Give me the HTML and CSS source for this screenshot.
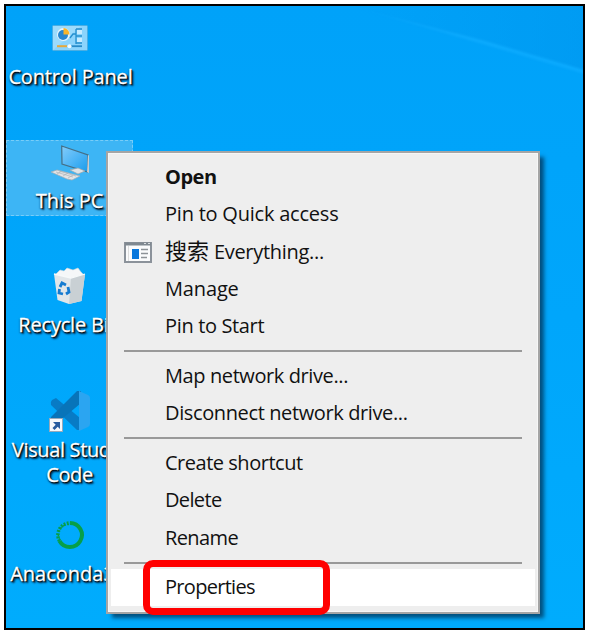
FILE: index.html
```html
<!DOCTYPE html>
<html lang="en">
<head>
<meta charset="utf-8">
<title>Desktop</title>
<link rel="stylesheet" href="styles.css">
</head>
<body>
<main class="desktop">
  <svg class="beam" viewBox="0 0 579 624" aria-hidden="true">
    <defs>
      <linearGradient id="ray" x1="0" x2="1"><stop offset="0" stop-color="#16acff" stop-opacity="0"/><stop offset=".5" stop-color="#10adff" stop-opacity=".7"/><stop offset="1" stop-color="#0cabff" stop-opacity=".8"/></linearGradient>
      <linearGradient id="dim" x1="0" x2="1"><stop offset="0" stop-color="#0097ee" stop-opacity="0"/><stop offset="1" stop-color="#0097ee" stop-opacity=".6"/></linearGradient>
    </defs>
    <path d="M345 0H579V65L480 36Z" fill="url(#dim)"/>
    <path class="ray" d="M345 0L480 35L579 64V68L480 39Z" fill="url(#ray)"/>
  </svg>

  <section class="icons">
    <div class="shortcut">
      <div class="glyph"><svg width="38" height="44" viewBox="0 0 38 44">
        <rect x="1.5" y="9.5" width="35" height="25" rx="1" fill="#8bd4fc" stroke="#4aaee3"/>
        <path d="M2 34V10H30Z" fill="#a8dffc" opacity=".6"/>
        <circle cx="12.5" cy="18.5" r="6.5" fill="#e7f5fc"/><circle cx="12" cy="19" r="5" fill="#2886cf"/>
        <path d="M12.500 18.500V12A6.500 6.500 0 0 1 18.500 18.500Z" fill="#f9b429"/>
        <path d="M19 22L22 18H25M25 13V28M25 13H31M25 20H31M25 27H31" fill="none" stroke="#248fce" stroke-width="1.300"/>
        <path d="M26 14H31V18H26ZM26 22H31V26H26Z" fill="#c9ecff"/>
        <path d="M6 30.200H16" stroke="#e6a93c" stroke-width="2"/><path d="M20 30.200H31" stroke="#278bc9" stroke-width="1.800"/>
        <circle cx="18.500" cy="30.200" r="2" fill="#eefaff"/>
      </svg></div>
      <span class="label l-cp">Control Panel</span>
    </div>
    <div class="shortcut selected">
      <div class="glyph"><svg width="38" height="44" viewBox="0 0 38 44">
        <defs><linearGradient id="screen" x2="1" y2="1"><stop stop-color="#83ccfa"/><stop offset=".5" stop-color="#4eb5f6"/><stop offset="1" stop-color="#189bea"/></linearGradient></defs>
        <path d="M10.700 6L37 15L36.500 32L11 24Z" fill="url(#screen)" stroke="#456f86" stroke-width="1.200"/>
        <path d="M37 15L38 15.500V33L36 32Z" fill="#c9cdd0"/>
        <path d="M19 30L27 28L34 31L27 34Z" fill="#e0e3e6" stroke="#9ca7ae" stroke-width=".7"/>
        <path d="M0 32L6 30L29 36L21 40L16 39Z" fill="#e3e4e6" stroke="#a6adb2" stroke-width=".7"/>
        <path d="M5 32L22 37M8 31L25 36M6 34L11 31M12 36L17 33M17 38L22 35" stroke="#aeb3b7" stroke-width=".7"/>
      </svg></div>
      <span class="label l-pc">This PC</span>
    </div>
    <div class="shortcut">
      <div class="glyph"><svg width="38" height="44" viewBox="0 0 38 44">
        <path d="M5 10L9 6L13 7L16 4L22 6L27 4L30 8L32 10L30 15H6Z" fill="#f5f7f8" stroke="#ccd5da" stroke-width=".6"/>
        <path d="M3 10L20 14L34 10L30.500 37L18 40L6.500 36Z" fill="#e1e6e9"/>
        <path d="M20 14L34 10L30.500 37L18 40Z" fill="#c9d0d4"/>
        <path d="M3 10L20 14L34 10" fill="none" stroke="#f6f9fa" stroke-width="1.300"/>
        <path d="M9 23L11 19L15 21M17 23L18 28L15 30M12 30L8 29L8.500 25" fill="none" stroke="#147bd1" stroke-width="2.800"/>
      </svg></div>
      <span class="label l-bin">Recycle Bin</span>
    </div>
    <div class="shortcut">
      <div class="glyph"><svg width="44" height="44" viewBox="0 0 44 44">
        <path d="M4 11L8 9L32 29V41H29L3 16Q2 13 4 11Z" fill="#087bc5"/>
        <path d="M3 28L29 2H33V14L8 35L4 33Q2 31 3 28Z" fill="#0874b9"/>
        <path d="M31 2L40 6Q42 7 42 9V35Q42 37 40 38L31 42Z" fill="#2ba5f1"/>
        <rect x="1.500" y="29.500" width="13" height="13" fill="#f6f8fb" stroke="#98a9ba"/>
        <path d="M5 33H12V40L9.700 37.700L6.500 41L4.500 39L7.700 35.700Z" fill="#285b9f"/>
      </svg></div>
      <span class="label l-code">Visual Studio<br>Code</span>
    </div>
    <div class="shortcut">
      <div class="glyph"><svg width="38" height="44" viewBox="0 0 38 44">
        <path d="M19 10A12 12 0 1 1 8.500 28" fill="none" stroke="#079f49" stroke-width="4"/>
        <path d="M8.500 28A12 12 0 0 1 19 10" fill="none" stroke="#079f49" stroke-width="3.500" stroke-dasharray="1.800 1.300"/>
        <path d="M9 27A10 10 0 0 1 18 11.500" fill="none" stroke="#079f49" stroke-width="1.500" stroke-dasharray="2 2"/>
      </svg></div>
      <span class="label l-ana">Anaconda3</span>
    </div>
  </section>

  <nav class="menu">
    <div class="item"><span class="t-open">Open</span></div>
    <div class="item"><span class="t-quick">Pin to Quick access</span></div>
    <div class="item"><svg class="app" width="28" height="21" viewBox="0 0 28 21"><rect x="1" y="1" width="26" height="19" fill="#fafbfc" stroke="#8b929a" stroke-width="2"/><path d="M1 2H27" stroke="#7f8890" stroke-width="3"/><path d="M20 1.500H22M24 1.500H26" stroke="#dce0e2"/><path d="M4.500 4V19" stroke="#ddd" /><path d="M8 7H15V17H8Z" fill="#0877dc"/><path d="M17 7.500H24M17 11.500H24M17 15.500H23" stroke="#8c9297" stroke-width="1.500"/></svg><span class="t-every"><span class="cjk">搜索</span> Everything...</span></div>
    <div class="item"><span class="t-manage">Manage</span></div>
    <div class="item"><span class="t-start">Pin to Start</span></div>
    <hr>
    <div class="item"><span class="t-map">Map network drive...</span></div>
    <div class="item"><span class="t-disc">Disconnect network drive...</span></div>
    <hr>
    <div class="item"><span class="t-create">Create shortcut</span></div>
    <div class="item"><span class="t-delete">Delete</span></div>
    <div class="item"><span class="t-rename">Rename</span></div>
    <hr>
    <div class="item active"><span class="t-prop">Properties</span><i class="marker"></i></div>
  </nav>
</main>
</body>
</html>
```
FILE: styles.css
```css
* { box-sizing: border-box; }
body {
  margin: 0;
  width: 589px;
  height: 633px;
  padding: 4px;
  background: #fff;
  overflow: hidden;
  font-family: "Open Sans", "Noto Sans CJK SC", sans-serif;
}
.desktop {
  position: relative;
  width: 581px;
  height: 626px;
  border: 2px solid #000;
  background: linear-gradient(180deg, #00a2f9 0%, #00a6fb 50%, #00acfd 100%);
  overflow: hidden;
}
.beam { position: absolute; top: 0; left: 0; width: 579px; height: 624px; }
.ray { filter: blur(1px); }
.icons {
  position: relative;
  display: flex;
  flex-direction: column;
  width: 127px;
  margin-left: 0;
  padding-top: 9.700px;
}
.shortcut {
  display: flex;
  flex-direction: column;
  align-items: center;
  height: 76px;
  margin-bottom: 48.300px;
}
.selected { background: #3db5f5; outline: 1.500px dashed #79cdf8; outline-offset: -1.500px; }
.glyph { height: 44px; }
.glyph svg { display: block; }
.label {
  margin-top: 4px;
  color: #fff;
  font-size: 20px;
  line-height: 25px;
  text-align: center;
  white-space: nowrap;
  -webkit-text-stroke: .3px #fff;
  text-shadow: 1px 1px 1px #000, 2px 2px 2px #001b38, 0 1px 2px #002b50;
}
.l-cp { letter-spacing: -.150px; margin-left: 2px; }
.l-code { letter-spacing: -.350px; }
.l-bin { letter-spacing: -.200px; }
.l-ana { margin-right: 14px; }
.menu {
  position: absolute;
  left: 100px;
  top: 145px;
  width: 434px;
  height: 463px;
  padding: 5.500px 3px;
  border: 2px solid #a5a5a5;
  background: #eee;
  box-shadow: inset 0 0 0 1px #f6f6f6, 5px 5px 4px -1px rgba(0, 30, 60, .65);
  color: #111;
}
.item {
  position: relative;
  display: flex;
  align-items: center;
  height: 37.400px;
  padding: 0 0 1px 54px;
  font-size: 20px;
  line-height: 30px;
  white-space: nowrap;
}
.app { position: absolute; left: 13px; top: 9px; }
.menu hr {
  height: 2px;
  margin: 5px 13px 5.200px;
  border: 0;
  background: #999;
}
.active { background: #fff; }
.marker {
  position: absolute;
  left: 32px;
  top: -9px;
  width: 187px;
  height: 55px;
  border: 7px solid #f00;
  border-radius: 10px;
}
.t-open { font-weight: 700; letter-spacing: -.500px; }
.t-quick { letter-spacing: -.220px; }
.t-every { letter-spacing: -.300px; }
.cjk { font-size: 22px; letter-spacing: 0; }
.t-manage { letter-spacing: -.150px; }
.t-start { letter-spacing: -.350px; }
.t-map { letter-spacing: -.400px; }
.t-disc { letter-spacing: -.380px; }
.t-create { letter-spacing: -.480px; }
.t-delete { letter-spacing: -.650px; }
.t-rename { letter-spacing: -.600px; }
.t-prop { letter-spacing: -.700px; }
```
